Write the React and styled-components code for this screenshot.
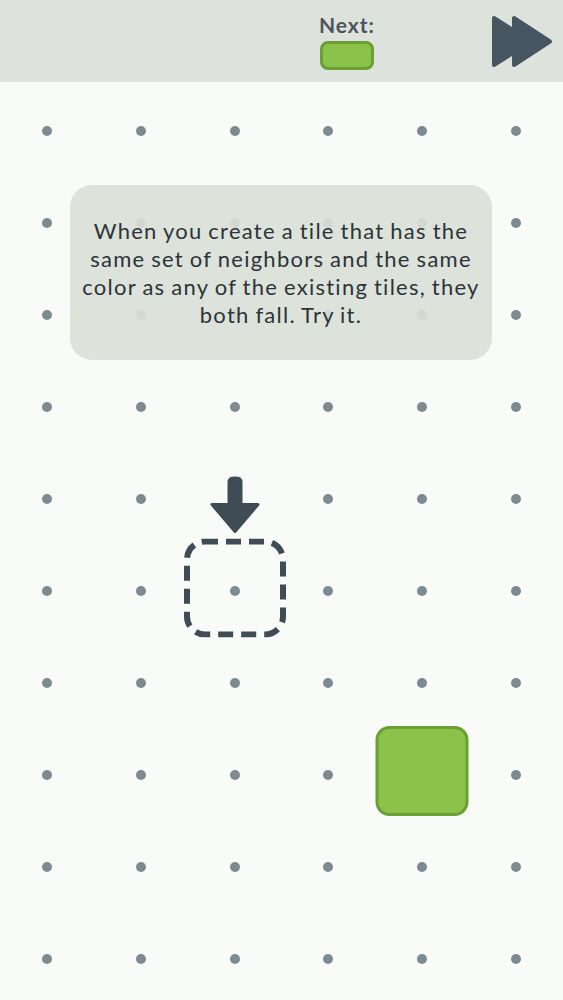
import React from 'react';
import styled, { createGlobalStyle } from 'styled-components';

const GlobalStyle = createGlobalStyle`
  html, body {
    margin: 0;
    padding: 0;
    background: #f8fbf7;
    font-family: Lato, "Open Sans", sans-serif;
  }
`;

const Screen = styled.div`
  width: 563px;
  height: 1000px;
  overflow: hidden;
  background: #f8fbf7;
`;

const TopBar = styled.div`
  height: 82px;
  background: #dee2dd;
  display: flex;
  align-items: center;
  justify-content: flex-end;
  padding-right: 10px;
`;

const NextGroup = styled.div`
  display: flex;
  flex-direction: column;
  align-items: center;
  gap: 5px;
  margin-right: 116px;
  margin-top: 2px;
`;

const NextLabel = styled.div`
  font-size: 21px;
  line-height: 22px;
  font-weight: 700;
  color: #4a555b;
  letter-spacing: 1px;
`;

const NextPill = styled.div`
  width: 48px;
  height: 23px;
  border-radius: 8px;
  background: #8bc34a;
  border: 3px solid #6a9f31;
`;

const FastForward = styled.svg`
  width: 62px;
  height: 53px;
  display: block;
`;

const Board = styled.div`
  position: relative;
  padding-top: 3px;
  display: grid;
  grid-template-columns: repeat(6, 1fr);
  grid-auto-rows: 92px;
`;

const Cell = styled.div`
  position: relative;
  display: flex;
  align-items: center;
  justify-content: center;
`;

const Dot = styled.div`
  width: 10px;
  height: 10px;
  border-radius: 50%;
  background: #7d8a92;
`;

const Centered = styled.div`
  position: absolute;
  left: 50%;
  top: 50%;
  transform: translate(-50%, -50%);
`;

const Tile = styled(Centered)`
  width: 87px;
  height: 84px;
  margin-top: -4px;
  border-radius: 14px;
  background: #8bc34a;
  border: 3px solid #6a9f31;
`;

const Ghost = styled(Centered)`
  width: 102px;
  height: 99px;
  margin-top: -3px;
`;

const Arrow = styled.svg`
  position: absolute;
  left: 50%;
  top: -62px;
  transform: translateX(-50%);
  width: 54px;
  height: 58px;
`;

const Hint = styled.div`
  position: absolute;
  left: 70px;
  top: 103px;
  width: 422px;
  height: 175px;
  box-sizing: border-box;
  border-radius: 22px;
  background: rgba(218, 223, 216, 0.92);
  display: flex;
  align-items: center;
  justify-content: center;
`;

const HintText = styled.p`
  margin: 0;
  white-space: nowrap;
  font-size: 22px;
  line-height: 28px;
  text-align: center;
  color: #2b3438;
  letter-spacing: 1.25px;
  word-spacing: -1px;
`;

const ROWS = 10;
const COLS = 6;

const HINT_LINES = [
  'When you create a tile that has the',
  'same set of neighbors and the same',
  'color as any of the existing tiles, they',
  'both fall. Try it.',
];

function GhostTile() {
  return (
    <Ghost>
      <svg width="102" height="99" viewBox="0 0 102 99">
        <rect
          x="3" y="3" width="96" height="93" rx="18"
          fill="none" stroke="#3f4c55" strokeWidth="6"
          strokeDasharray="15 8" strokeDashoffset="2"
        />
      </svg>
      <Arrow viewBox="0 0 54 58">
        <path
          d="M21 6 Q21 1 27 1 Q33 1 33 6 L33 28 L50 28 L27 55 L4 28 L21 28 Z"
          fill="#3f4c55" stroke="#3f4c55" strokeWidth="3" strokeLinejoin="round"
        />
      </Arrow>
    </Ghost>
  );
}

export default function App() {
  const cells = [];
  for (let r = 0; r < ROWS; r++) {
    for (let c = 0; c < COLS; c++) {
      cells.push(
        <Cell key={`${r}-${c}`}>
          <Dot />
          {r === 5 && c === 2 && <GhostTile />}
          {r === 7 && c === 4 && <Tile />}
        </Cell>
      );
    }
  }

  return (
    <Screen>
      <GlobalStyle />
      <TopBar>
        <NextGroup>
          <NextLabel>Next:</NextLabel>
          <NextPill />
        </NextGroup>
        <FastForward viewBox="0 0 62 53">
          <g fill="#46555f" stroke="#46555f" strokeWidth="4" strokeLinejoin="round">
            <path d="M3 3 L3 50 L40 26.5 Z" />
            <path d="M23 3 L23 50 L59 26.5 Z" />
          </g>
        </FastForward>
      </TopBar>
      <Board>
        {cells}
        <Hint>
          <HintText>
            {HINT_LINES.map((line, i) => (
              <React.Fragment key={i}>
                {line}
                {i < HINT_LINES.length - 1 && <br />}
              </React.Fragment>
            ))}
          </HintText>
        </Hint>
      </Board>
    </Screen>
  );
}
